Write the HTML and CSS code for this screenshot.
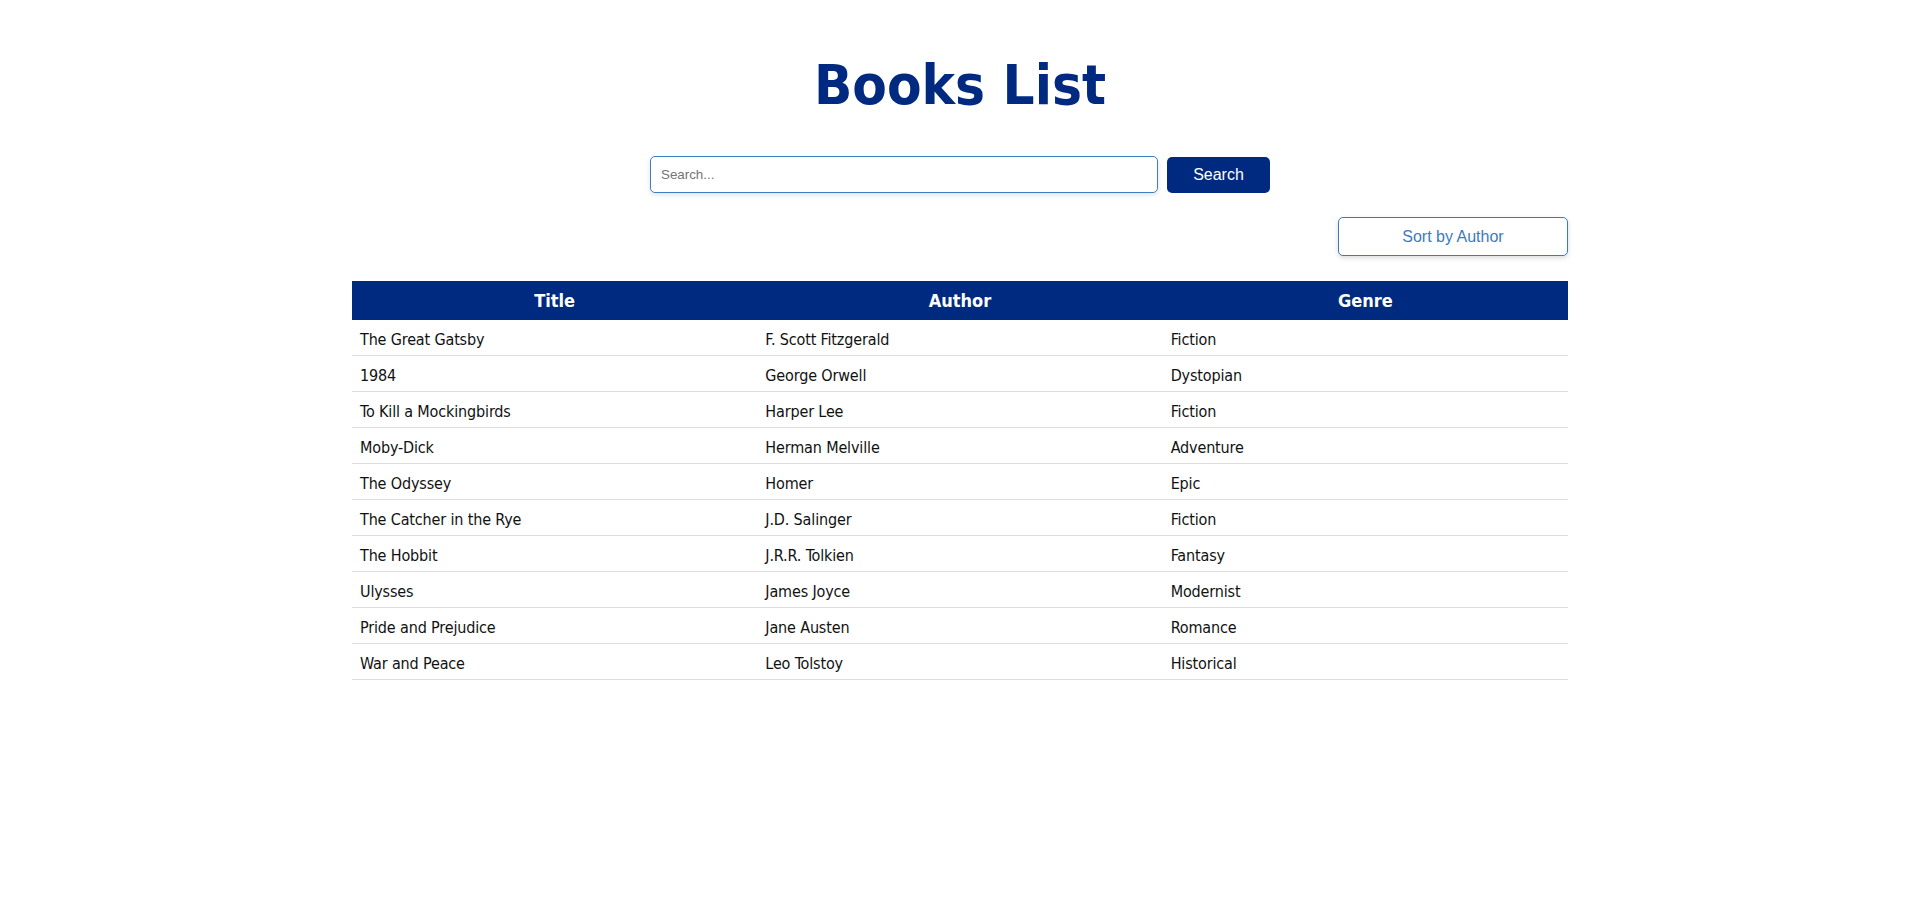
FILE: index.html
```html
<!DOCTYPE html>
<html lang="en">
<head>
<meta charset="utf-8">
<title>Books List</title>
<link rel="stylesheet" href="styles.css">
</head>
<body>
<div class="page">
  <h1 class="title">Books List</h1>
  <div class="search-bar">
    <input class="search-input" type="text" placeholder="Search...">
    <button class="search-btn">Search</button>
  </div>
  <div class="sort-row">
    <button class="sort-btn">Sort by Author</button>
  </div>
  <table class="books">
    <thead>
      <tr><th>Title</th><th>Author</th><th>Genre</th></tr>
    </thead>
    <tbody>
      <tr><td>The Great Gatsby</td><td>F. Scott Fitzgerald</td><td>Fiction</td></tr>
      <tr><td>1984</td><td>George Orwell</td><td>Dystopian</td></tr>
      <tr><td>To Kill a Mockingbirds</td><td>Harper Lee</td><td>Fiction</td></tr>
      <tr><td>Moby-Dick</td><td>Herman Melville</td><td>Adventure</td></tr>
      <tr><td>The Odyssey</td><td>Homer</td><td>Epic</td></tr>
      <tr><td>The Catcher in the Rye</td><td>J.D. Salinger</td><td>Fiction</td></tr>
      <tr><td>The Hobbit</td><td>J.R.R. Tolkien</td><td>Fantasy</td></tr>
      <tr><td>Ulysses</td><td>James Joyce</td><td>Modernist</td></tr>
      <tr><td>Pride and Prejudice</td><td>Jane Austen</td><td>Romance</td></tr>
      <tr><td>War and Peace</td><td>Leo Tolstoy</td><td>Historical</td></tr>
    </tbody>
  </table>
</div>
</body>
</html>
```
FILE: styles.css
```css
html, body {
  margin: 0;
  padding: 0;
  background: #ffffff;
}

body {
  font-family: Tahoma, "DejaVu Sans Condensed", "DejaVu Sans", sans-serif;
  color: #111111;
}

.page {
  width: 1216px;
  margin: 0 auto;
  padding-top: 52px;
}

.title {
  margin: 0;
  font-size: 56px;
  line-height: 66px;
  font-weight: bold;
  text-align: center;
  color: #002a7f;
}

.search-bar {
  margin-top: 38px;
  display: flex;
  justify-content: center;
  align-items: center;
  gap: 9px;
}

.search-input {
  box-sizing: border-box;
  width: 508px;
  height: 37px;
  padding: 0 10px;
  border: 1px solid #3d7fc0;
  border-radius: 5px;
  font-family: "Liberation Sans", Arial, sans-serif;
  font-size: 13.33px;
  color: #333;
  box-shadow: 0 2px 5px rgba(0, 0, 0, 0.12);
  outline: none;
}

.search-input::placeholder {
  color: #757575;
}

.search-btn {
  box-sizing: border-box;
  width: 103px;
  height: 36px;
  border: none;
  border-radius: 5px;
  background: #002a7f;
  color: #ffffff;
  font-family: "Liberation Sans", Arial, sans-serif;
  font-size: 16px;
  cursor: pointer;
}

.sort-row {
  margin-top: 24px;
  display: flex;
  justify-content: flex-end;
}

.sort-btn {
  box-sizing: border-box;
  width: 230px;
  height: 39px;
  border: 1px solid #3a7bbf;
  border-radius: 5px;
  background: #ffffff;
  color: #3a7bbf;
  font-family: "Liberation Sans", Arial, sans-serif;
  font-size: 16px;
  box-shadow: 0 2px 5px rgba(0, 0, 0, 0.15);
  cursor: pointer;
}

.books {
  margin-top: 25px;
  width: 100%;
  border-collapse: separate;
  border-spacing: 0;
  table-layout: fixed;
}

.books th {
  background: #002a7f;
  color: #ffffff;
  font-size: 18px;
  line-height: 22px;
  font-weight: bold;
  text-align: center;
  padding: 9px 8px 8px;
}

.books td {
  font-size: 16px;
  line-height: 19px;
  letter-spacing: -0.15px;
  padding: 10px 8px 6px;
  text-align: left;
  border-bottom: 1px solid #dddddd;
}
```
